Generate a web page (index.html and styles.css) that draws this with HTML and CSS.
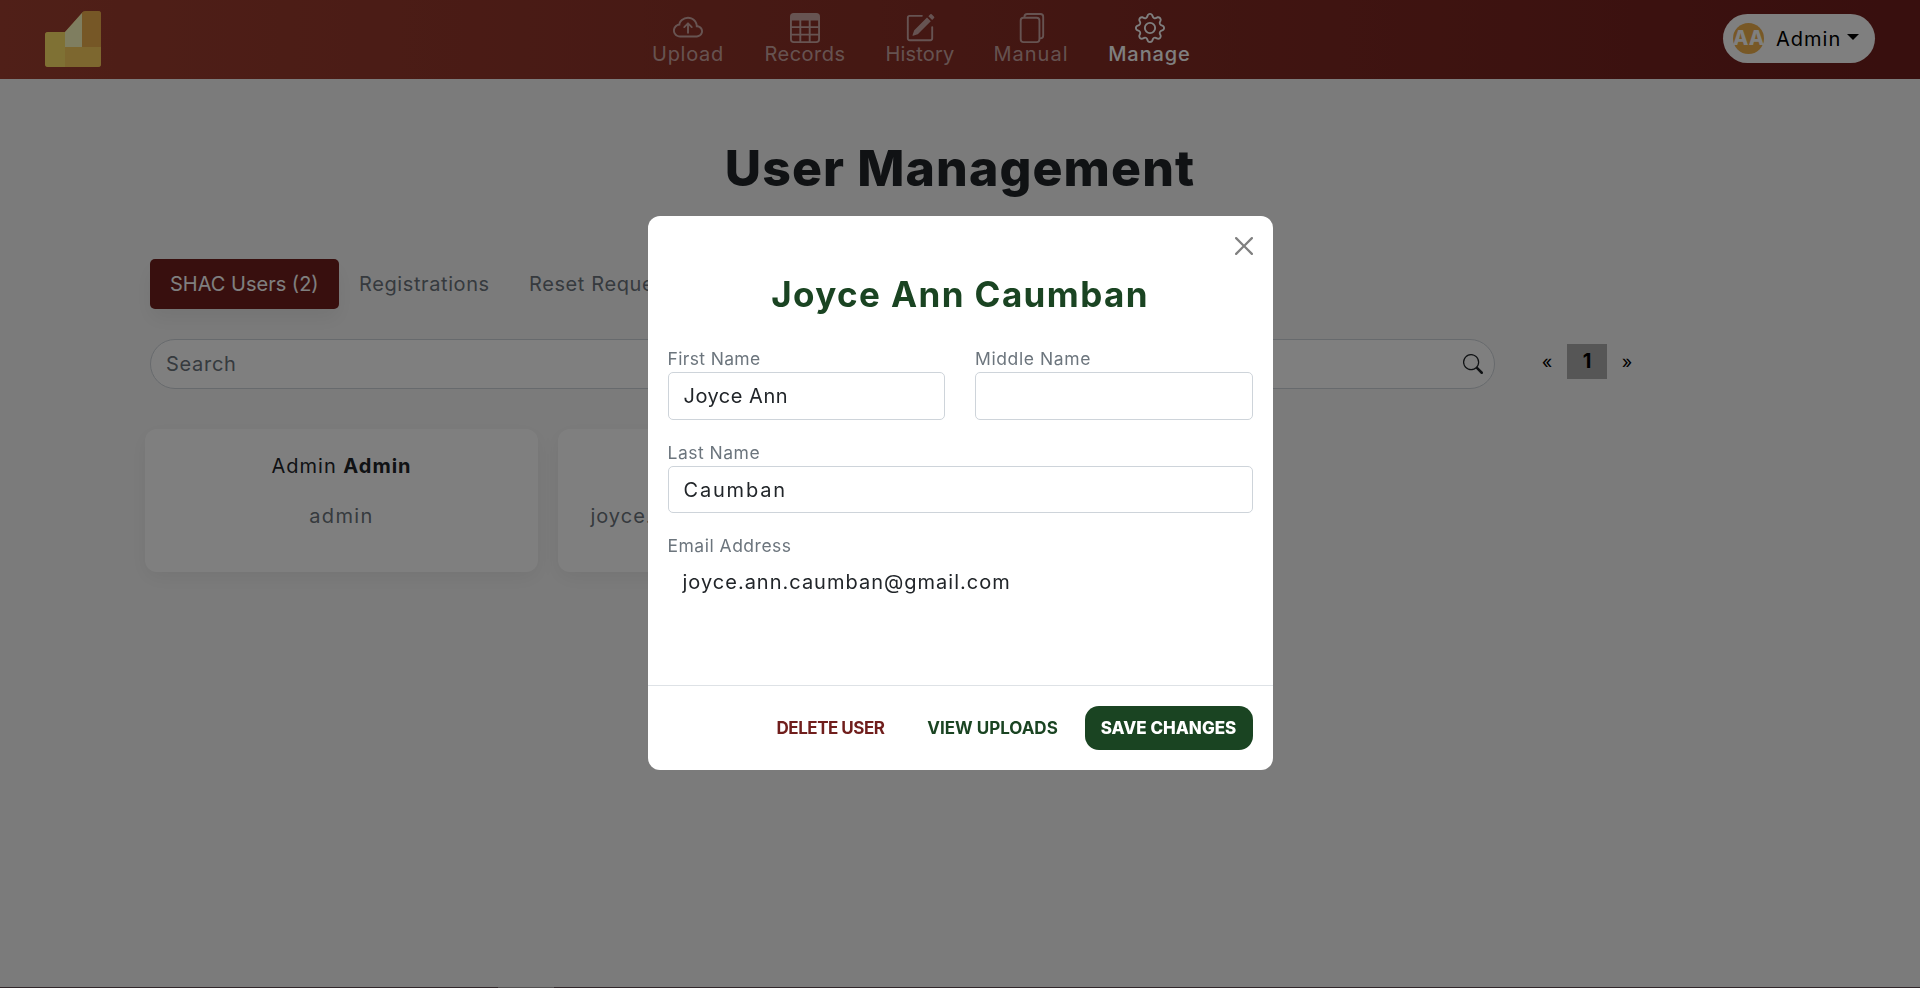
FILE: index.html
```html
<!DOCTYPE html>
<html lang="en">
<head>
<meta charset="utf-8">
<title>User Management</title>
<link rel="stylesheet" href="styles.css">
</head>
<body>
<header class="navbar">
  <svg class="logo" viewBox="0 0 56 56"><path fill="#f0aa4c" d="M0 24q0-3 3-3h17L36 3q2-3 5-3h12q3 0 3 3v50q0 3-3 3H3q-3 0-3-3z"/><path fill="#ffe268" d="M0 24q0-3 3-3h17v35H3q-3 0-3-3z"/><path fill="#fbce5e" d="M20 36h36v17q0 3-3 3H20z"/><path fill="#ecaf4c" d="M37 1.500q1-1.500 4-1.500h12q3 0 3 3v33H37z"/><path fill="#fffcc0" d="M20 21L37 2v34H20z"/></svg>
  <nav class="menu">
    <a class="item upload"><svg class="icon" viewBox="0 0 16 16"><path fill-rule="evenodd" d="M7.646 5.146a.5.5 0 0 1 .708 0l2 2a.5.5 0 0 1-.708.708L8.500 6.707V10.500a.5.5 0 0 1-1 0V6.707L6.354 7.854a.5.5 0 1 1-.708-.708z"/><path d="M4.406 3.342A5.530 5.530 0 0 1 8 2c2.690 0 4.923 2 5.166 4.579C14.758 6.804 16 8.137 16 9.773 16 11.569 14.502 13 12.687 13H3.781C1.708 13 0 11.366 0 9.318c0-1.763 1.266-3.223 2.942-3.593.143-.863.698-1.723 1.464-2.383m.653.757c-.757.653-1.153 1.440-1.153 2.056v.448l-.445.049C2.064 6.805 1 7.952 1 9.318 1 10.785 2.230 12 3.781 12h8.906C13.980 12 15 10.988 15 9.773c0-1.216-1.020-2.228-2.313-2.228h-.5v-.5C12.188 4.825 10.328 3 8 3a4.530 4.530 0 0 0-2.941 1.100z"/></svg><span>Upload</span></a>
    <a class="item records"><svg class="icon" viewBox="0 0 16 16"><path fill-rule="evenodd" d="M2 0h12a2 2 0 0 1 2 2v12a2 2 0 0 1-2 2H2a2 2 0 0 1-2-2V2a2 2 0 0 1 2-2m13 4h-4v3h4zm0 4h-4v3h4zm0 4h-4v3h3a1 1 0 0 0 1-1zm-5 3v-3H6v3zm-5 0v-3H1v2a1 1 0 0 0 1 1zm-4-4h4V8H1zm0-4h4V4H1zm5-3v3h4V4zm4 4H6v3h4z"/></svg><span>Records</span></a>
    <a class="item history"><svg class="icon" viewBox="0 0 16 16"><path d="M15.502 1.940a.5.5 0 0 1 0 .706L14.459 3.690l-2-2L13.502.646a.5.5 0 0 1 .707 0l1.293 1.293zm-1.750 2.456-2-2L4.939 9.210a.5.5 0 0 0-.121.196l-.805 2.414a.25.25 0 0 0 .316.316l2.414-.805a.5.5 0 0 0 .196-.120z"/><path fill-rule="evenodd" d="M1 13.500A1.500 1.500 0 0 0 2.500 15h11a1.500 1.500 0 0 0 1.500-1.500v-6a.5.5 0 0 0-1 0v6a.5.5 0 0 1-.5.5h-11a.5.5 0 0 1-.5-.5v-11a.5.5 0 0 1 .5-.5H9a.5.5 0 0 0 0-1H2.500A1.500 1.500 0 0 0 1 2.500z"/></svg><span>History</span></a>
    <a class="item manual"><svg class="icon" viewBox="0 0 16 16"><path d="M13 0H6a2 2 0 0 0-2 2 2 2 0 0 0-2 2v10a2 2 0 0 0 2 2h7a2 2 0 0 0 2-2 2 2 0 0 0 2-2V2a2 2 0 0 0-2-2m0 13V4a2 2 0 0 0-2-2H5a1 1 0 0 1 1-1h7a1 1 0 0 1 1 1v10a1 1 0 0 1-1 1M3 4a1 1 0 0 1 1-1h7a1 1 0 0 1 1 1v10a1 1 0 0 1-1 1H4a1 1 0 0 1-1-1z"/></svg><span>Manual</span></a>
    <a class="item manage active"><svg class="icon" viewBox="0 0 16 16"><path d="M8 4.754a3.246 3.246 0 1 0 0 6.492 3.246 3.246 0 0 0 0-6.492M5.754 8a2.246 2.246 0 1 1 4.492 0 2.246 2.246 0 0 1-4.492 0"/><path d="M9.796 1.343c-.527-1.790-3.065-1.790-3.592 0l-.094.319a.873.873 0 0 1-1.255.520l-.292-.160c-1.640-.892-3.433.902-2.540 2.541l.159.292a.873.873 0 0 1-.520 1.255l-.319.094c-1.790.527-1.790 3.065 0 3.592l.319.094a.873.873 0 0 1 .520 1.255l-.160.292c-.892 1.640.901 3.434 2.541 2.540l.292-.159a.873.873 0 0 1 1.255.520l.094.319c.527 1.790 3.065 1.790 3.592 0l.094-.319a.873.873 0 0 1 1.255-.520l.292.160c1.640.893 3.434-.902 2.540-2.541l-.159-.292a.873.873 0 0 1 .520-1.255l.319-.094c1.790-.527 1.790-3.065 0-3.592l-.319-.094a.873.873 0 0 1-.520-1.255l.160-.292c.893-1.640-.902-3.433-2.541-2.540l-.292.159a.873.873 0 0 1-1.255-.520zm-2.633.283c.246-.835 1.428-.835 1.674 0l.094.319a1.873 1.873 0 0 0 2.693 1.115l.291-.160c.764-.415 1.600.420 1.184 1.185l-.159.292a1.873 1.873 0 0 0 1.116 2.692l.318.094c.835.246.835 1.428 0 1.674l-.319.094a1.873 1.873 0 0 0-1.115 2.693l.160.291c.415.764-.420 1.600-1.185 1.184l-.291-.159a1.873 1.873 0 0 0-2.693 1.116l-.094.318c-.246.835-1.428.835-1.674 0l-.094-.319a1.873 1.873 0 0 0-2.692-1.115l-.292.160c-.764.415-1.600-.420-1.184-1.185l.159-.291A1.873 1.873 0 0 0 1.945 8.930l-.319-.094c-.835-.246-.835-1.428 0-1.674l.319-.094A1.873 1.873 0 0 0 3.060 4.377l-.160-.292c-.415-.764.420-1.600 1.185-1.184l.292.159a1.873 1.873 0 0 0 2.692-1.115z"/></svg><span>Manage</span></a>
  </nav>
  <div class="account"><span class="avatar">AA</span><span class="account-name">Admin</span><i class="caret"></i></div>
</header>
<main class="page">
  <h1 class="heading"><span>User Management</span></h1>
  <div class="tabs"><a class="tab selected"><span>SHAC Users (2)</span></a><a class="tab regs"><span>Registrations</span></a><a class="tab reset"><span>Reset Requests</span></a></div>
  <div class="toolbar">
    <div class="search"><span>Search</span><svg class="search-icon" viewBox="0 0 16 16"><path d="M11.742 10.344a6.500 6.500 0 1 0-1.397 1.398h-.001q.044.060.098.115l3.850 3.850a1 1 0 0 0 1.415-1.414l-3.850-3.850a1 1 0 0 0-.115-.100zM12 6.500a5.500 5.500 0 1 1-11 0 5.500 5.500 0 0 1 11 0"/></svg></div>
    <div class="pager"><a>«</a><b>1</b><a>»</a></div>
  </div>
  <section class="cards">
    <article class="card"><p class="name"><span>Admin</span> <b>Admin</b></p><p class="mail short">admin</p></article>
    <article class="card"><p class="name other">Joyce Ann <b>Caumban</b></p><p class="mail"><span class="email">joyce.ann.caumban@gmail.com</span></p></article>
  </section>
</main>
<footer class="footer"></footer>
<div class="backdrop">
  <div class="modal">
    <svg class="close" viewBox="0 0 16 16"><path d="M.293.293a1 1 0 0 1 1.414 0L8 6.586 14.293.293a1 1 0 1 1 1.414 1.414L9.414 8l6.293 6.293a1 1 0 0 1-1.414 1.414L8 9.414l-6.293 6.293a1 1 0 0 1-1.414-1.414L6.586 8 .293 1.707a1 1 0 0 1 0-1.414z"/></svg>
    <h2 class="title"><span>Joyce Ann Caumban</span></h2>
    <div class="fields">
      <div class="row">
        <div class="field"><label class="first">First Name</label><div class="input"><span class="given">Joyce Ann</span></div></div>
        <div class="field"><label class="middle">Middle Name</label><div class="input"></div></div>
      </div>
      <div class="field"><label>Last Name</label><div class="input"><span class="family">Caumban</span></div></div>
      <div class="field"><label>Email Address</label><div class="plain"><span class="email">joyce.ann.caumban@gmail.com</span></div></div>
    </div>
    <div class="actions"><a class="btn delete"><span>DELETE USER</span></a><a class="btn view"><span>VIEW UPLOADS</span></a><a class="btn save"><span>SAVE CHANGES</span></a></div>
  </div>
</div>
</body>
</html>
```
FILE: styles.css
```css
* { box-sizing: border-box; }
body { margin: 0; height: 988px; overflow: hidden; display: flex; flex-direction: column; background: #f7f7f7; color: #212529; font: 20px/30px Inter, "Noto Sans", sans-serif; }
p, h1, h2 { margin: 0; }
span { white-space: nowrap; }
svg { display: block; fill: currentColor; }
.navbar { height: 79px; flex: none; display: flex; align-items: flex-start; justify-content: space-between; padding: 0 45px; background: linear-gradient(90deg, #a03f30, #701e1c); }
.logo { width: 56px; height: 56px; margin-top: 11px; }
.menu { display: flex; gap: 40px; margin: 13px 0 0 19px; }
.item { display: flex; flex-direction: column; align-items: center; color: rgba(255,255,255,.58); }
.item span { line-height: 24px; }
.item.active { color: #fff; font-weight: 500; }
.icon { width: 30px; height: 30px; margin-bottom: -1px; }
.upload { width: 72px; letter-spacing: .7px; }
.records { width: 82px; letter-spacing: .5px; }
.history { width: 68px; letter-spacing: .2px; }
.manual { width: 74px; letter-spacing: 1px; }
.manage { width: 83px; letter-spacing: .9px; }
.account { width: 152px; height: 49px; margin-top: 14px; padding: 0 15px 0 10px; border-radius: 25px; background: #fff; color: #000; display: flex; align-items: center; }
.avatar { width: 31px; height: 31px; border-radius: 50%; background: #f0b04c; color: #fff; font-weight: 800; line-height: 31px; display: flex; justify-content: center; }
.account-name { margin: 0 5px 0 12px; width: 66px; letter-spacing: 1px; }
.caret { border: 6px solid transparent; border-top-color: #000; border-bottom: 0; margin-top: -3px; }
.page { flex: 1; padding: 59px 145px 0; }
.heading { font-size: 50px; line-height: 60px; font-weight: 800; text-align: center; letter-spacing: 1.1px; }
.tabs { display: flex; margin: 61px 0 30px 5px; }
.tab { height: 50px; flex: none; line-height: 50px; padding: 0 20px; color: #6c757d; letter-spacing: .6px; }
.selected { width: 189px; border-radius: 5px; background: #701e1c; color: #fff; letter-spacing: 0; box-shadow: 0 10px 20px rgba(0,0,0,.06); }
.regs { width: 170px; }
.toolbar { display: flex; align-items: center; padding-left: 5px; }
.search { width: 1345px; height: 50px; border: 1px solid #ced4da; border-radius: 25px; background: #fff; color: #6c757d; display: flex; align-items: center; justify-content: space-between; padding: 0 11px 0 15px; letter-spacing: .7px; }
.search-icon { width: 20px; height: 20px; color: #212529; }
.pager { display: flex; align-items: center; margin: -5px 0 0 32px; color: #000; text-align: center; }
.pager a { width: 40px; font-size: 18px; }
.pager b { width: 40px; height: 35px; line-height: 35px; background: #adadad; }
.cards { display: flex; gap: 20px; margin-top: 40px; }
.card { width: 393px; height: 143px; flex: none; border-radius: 12px; background: #fff; text-align: center; padding-top: 22px; box-shadow: 0 6px 20px rgba(0,0,0,.06); }
.name { letter-spacing: 1px; }
.name.other { letter-spacing: 0; }
.mail { margin-top: 20px; color: #6c757d; }
.short { letter-spacing: 1.4px; }
.email { letter-spacing: 1px; }
.footer { height: 1px; flex: none; background: linear-gradient(90deg, #604e54 498px, #a6a0a2 498px 554px, #604e54 554px); }
.backdrop { position: fixed; inset: 0; background: rgba(0,0,0,.5); display: flex; justify-content: center; align-items: flex-start; padding-top: 216px; }
.modal { width: 625px; height: 554px; border-radius: 12px; background: #fff; display: flex; flex-direction: column; }
.close { width: 18px; height: 18px; margin: 21px 20px 0 auto; color: #808080; }
.title { font-size: 35px; line-height: 42px; font-weight: 700; margin-top: 18px; text-align: center; color: #1a4422; letter-spacing: 1.4px; }
.fields { flex: 1; padding: 31px 20px 0; }
.row { display: flex; gap: 30px; }
.field { flex: 1; height: 93.5px; }
label { display: block; font-size: 17.5px; line-height: 26px; color: #6c757d; letter-spacing: .5px; }
.first { letter-spacing: .35px; }
.middle { letter-spacing: .6px; }
.input { height: 47.5px; border: 1px solid #ced4da; border-radius: 5px; padding: 0 15px; line-height: 46px; }
.given { letter-spacing: .5px; }
.family { letter-spacing: 1.8px; }
.plain { padding: 8px 15px; }
.actions { height: 85px; border-top: 1px solid #dee2e6; padding: 20px; display: flex; justify-content: flex-end; }
.btn { height: 44px; line-height: 44px; font-size: 17px; font-weight: 700; color: #1a4422; text-align: center; }
.delete { width: 138px; color: #701e1c; margin-right: 13px; letter-spacing: -.5px; }
.view { width: 160px; margin-right: 12px; }
.save { width: 168px; border-radius: 14px; background: #1a4422; color: #fff; font-weight: 800; letter-spacing: 0; }
```
